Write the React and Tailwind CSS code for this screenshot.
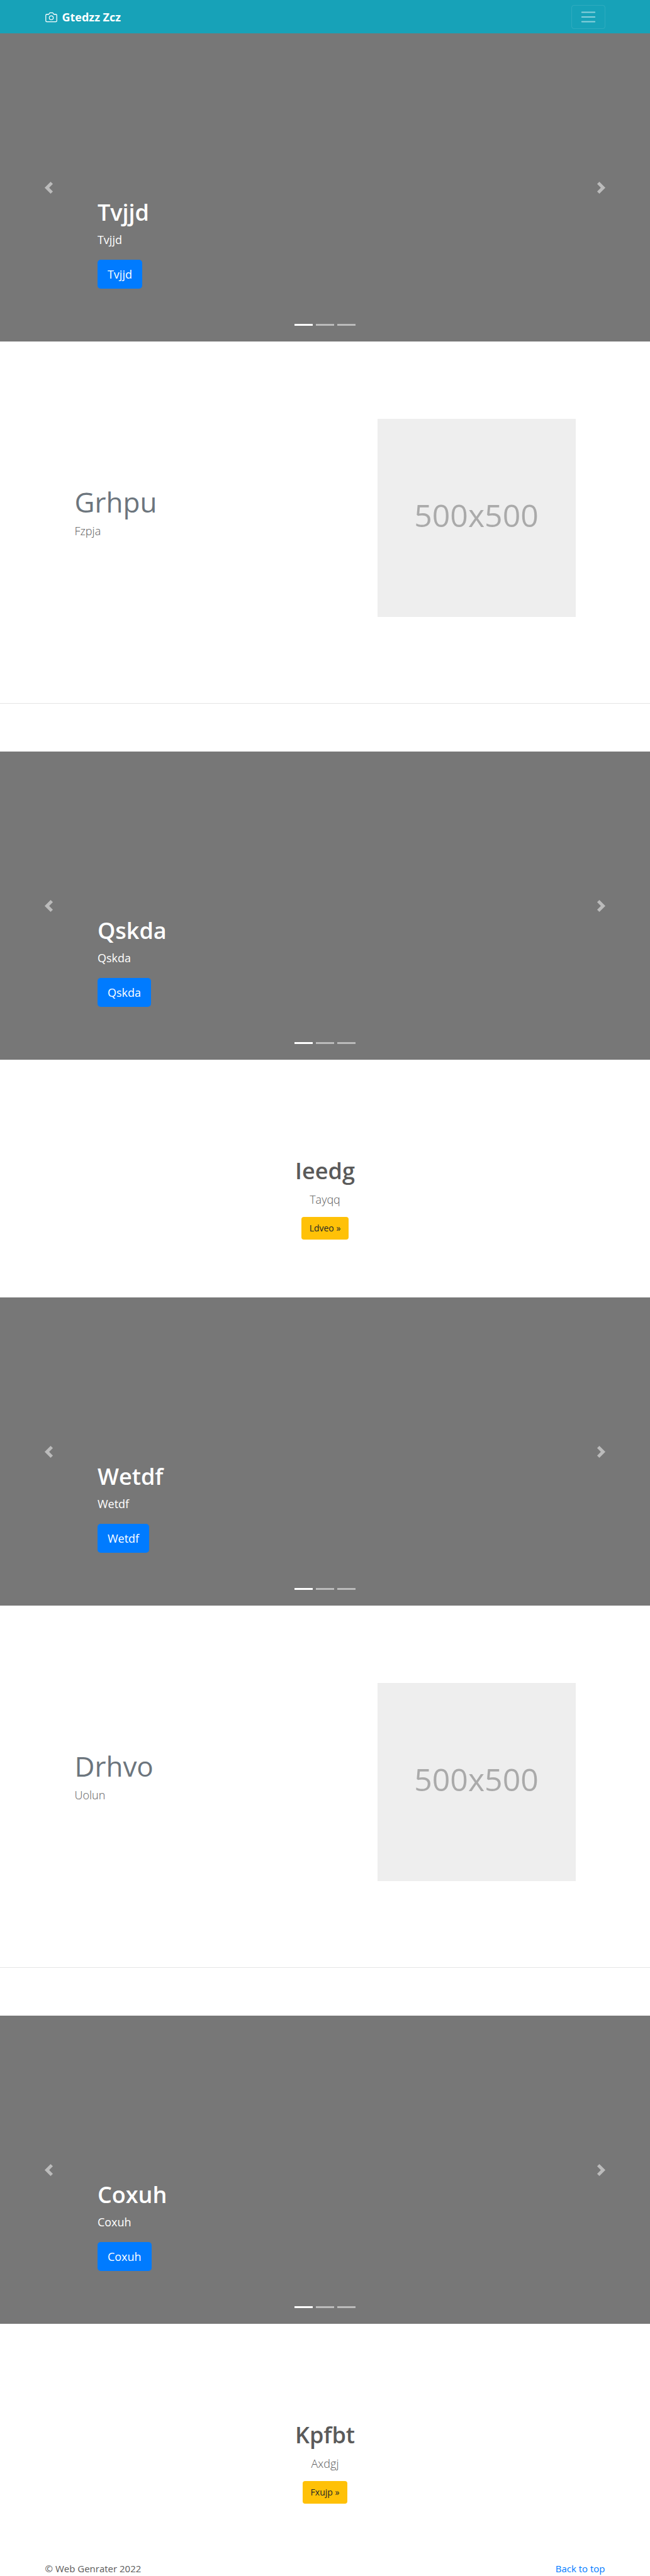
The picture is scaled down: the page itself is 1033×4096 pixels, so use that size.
import React from "react";

function CameraIcon() {
  return (
    <svg className="size-[19px]" viewBox="0 0 24 24" fill="none" stroke="currentColor" strokeWidth="1.6" strokeLinecap="round" strokeLinejoin="round" aria-hidden="true">
      <path d="M23 19a2 2 0 0 1-2 2H3a2 2 0 0 1-2-2V8a2 2 0 0 1 2-2h4l2-3h6l2 3h4a2 2 0 0 1 2 2z" />
      <circle cx="12" cy="13" r="4" />
    </svg>
  );
}

function Navbar() {
  return (
    <header id="top" className="bg-[#17a2b8] pt-2 pb-[7px] text-white">
      <div className="mx-auto flex max-w-[918px] items-center justify-between px-[14px]">
        <a href="#top" className="flex items-center gap-2 text-[18px] leading-7 font-bold">
          <CameraIcon />
          Gtedzz Zcz
        </a>
        <button type="button" aria-label="Toggle navigation" className="rounded border border-white/10 px-3 py-1">
          <svg className="size-7" viewBox="0 0 30 30" fill="none" stroke="currentColor" strokeOpacity="0.5" strokeWidth="2" strokeLinecap="round" aria-hidden="true">
            <path d="M4 7h22M4 15h22M4 23h22" />
          </svg>
        </button>
      </div>
    </header>
  );
}

function Carousel({ title }) {
  return (
    <section className="relative flex h-[490px] flex-col justify-end bg-[#777] px-[15%] pb-[84px] text-white">
      <h1 className="text-[36px] leading-[46px] font-semibold">{title}</h1>
      <p className="mt-[6px] mb-[18px] text-[18px] leading-7">{title}</p>
      <a href="#top" className="self-start rounded-[5px] bg-[#007bff] px-4 py-2 text-[18px] leading-[30px]">
        {title}
      </a>
      <button type="button" aria-label="Previous" className="absolute inset-y-0 left-0 flex w-[15%] items-center justify-center opacity-50">
        <svg className="size-[19px]" viewBox="0 0 8 8" fill="currentColor" aria-hidden="true">
          <path d="M5.25 0l-4 4 4 4 1.5-1.5-2.5-2.5 2.5-2.5-1.5-1.5z" />
        </svg>
      </button>
      <button type="button" aria-label="Next" className="absolute inset-y-0 right-0 flex w-[15%] items-center justify-center opacity-50">
        <svg className="size-[19px]" viewBox="0 0 8 8" fill="currentColor" aria-hidden="true">
          <path d="M2.75 0l-1.5 1.5 2.5 2.5-2.5 2.5 1.5 1.5 4-4-4-4z" />
        </svg>
      </button>
      <div className="absolute inset-x-0 bottom-[25px] flex justify-center gap-[5px]">
        <button type="button" aria-label="Slide 1" className="h-[3px] w-[29px] bg-white" />
        <button type="button" aria-label="Slide 2" className="h-[3px] w-[29px] bg-white/50" />
        <button type="button" aria-label="Slide 3" className="h-[3px] w-[29px] bg-white/50" />
      </div>
    </section>
  );
}

function Featurette({ title, text }) {
  return (
    <section className="pt-[123px] pb-[76px]">
      <div className="mx-auto flex max-w-[918px] items-center justify-between px-[61px]">
        <div className="pb-4">
          <h2 className="text-[44px] leading-[48px] text-[#6c757d]">{title}</h2>
          <p className="mt-2 text-[18px] leading-7 font-light">{text}</p>
        </div>
        <div role="img" aria-label="500x500" className="flex size-[315px] items-center justify-center bg-[#eee] pb-2 text-[50px] text-[#aaa]">
          500x500
        </div>
      </div>
      <hr className="mt-[137px] border-t border-[#e5e5e5]" />
    </section>
  );
}

function Promo({ title, text, action }) {
  return (
    <section className="flex flex-col items-center pt-[154px] pb-[92px] text-center">
      <h2 className="text-[36px] leading-[46px] font-semibold">{title}</h2>
      <p className="mt-2 mb-[14px] text-[18px] leading-7 font-light">{text}</p>
      <a href="#top" className="rounded bg-[#ffc107] px-[13px] py-[6px] text-[14px] leading-6 text-[#212529]">
        {action} »
      </a>
    </section>
  );
}

export default function App() {
  return (
    <div className="bg-white font-['Open_Sans','Noto_Sans',sans-serif] text-[#5a5a5a]">
      <Navbar />
      <main>
        <Carousel title="Tvjjd" />
        <Featurette title="Grhpu" text="Fzpja" />
        <Carousel title="Qskda" />
        <Promo title="Ieedg" text="Tayqq" action="Ldveo" />
        <Carousel title="Wetdf" />
        <Featurette title="Drhvo" text="Uolun" />
        <Carousel title="Coxuh" />
        <Promo title="Kpfbt" text="Axdgj" action="Fxujp" />
      </main>
      <footer className="mx-auto flex max-w-[918px] justify-between px-[14px] text-[15px] leading-[23px]">
        <p>© Web Genrater 2022</p>
        <a href="#top" className="text-[#007bff]">Back to top</a>
      </footer>
    </div>
  );
}
